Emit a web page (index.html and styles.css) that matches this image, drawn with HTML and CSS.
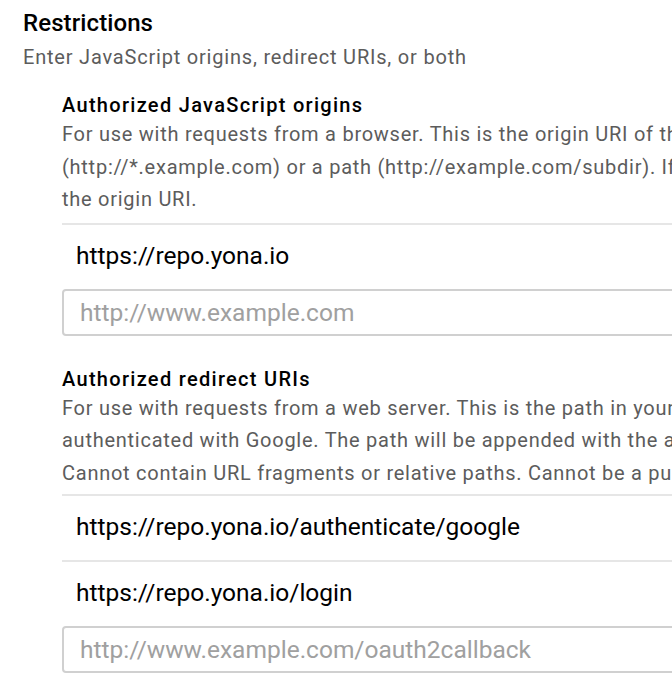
FILE: index.html
```html
<!DOCTYPE html>
<html>
<head>
<meta charset="utf-8">
<link rel="stylesheet" href="styles.css">
</head>
<body>
<div class="page">
  <h1 class="title">Restrictions</h1>
  <p class="subtitle">Enter JavaScript origins, redirect URIs, or both</p>

  <section class="group">
    <h2 class="group-title">Authorized JavaScript origins</h2>
    <p class="desc">For use with requests from a browser. This is the origin URI of the client application. It can't contain a wildcard<br>(http://*.example.com) or a path (http://example.com/subdir). If you're using a nonstandard port, you must include it in<br>the origin URI.</p>
    <ul class="uri-list">
      <li class="uri-item">https://repo.yona.io</li>
    </ul>
    <div class="uri-input"><input type="text" placeholder="http://www.example.com"></div>
  </section>

  <section class="group">
    <h2 class="group-title">Authorized redirect URIs</h2>
    <p class="desc desc-tight">For use with requests from a web server. This is the path in your application that users are redirected to after they have<br>authenticated with Google. The path will be appended with the authorization code for access. Must have a protocol.<br>Cannot contain URL fragments or relative paths. Cannot be a public IP address.</p>
    <ul class="uri-list">
      <li class="uri-item">https://repo.yona.io/authenticate/google</li>
      <li class="uri-item">https://repo.yona.io/login</li>
    </ul>
    <div class="uri-input"><input type="text" placeholder="http://www.example.com/oauth2callback"></div>
  </section>
</div>
</body>
</html>
```

FILE: styles.css
```css
html, body {
  margin: 0;
  padding: 0;
  background: #fff;
  overflow: hidden;
}
body {
  font-family: Roboto, "Liberation Sans", sans-serif;
  color: #000;
}
.page {
  width: 1200px;
  padding: 7px 0 0 23px;
}
.title {
  margin: 0;
  font-size: 24px;
  line-height: 32px;
  font-weight: 500;
  letter-spacing: 0.1px;
  color: #000;
}
.subtitle {
  margin: 2px 0 0;
  font-size: 20px;
  line-height: 32px;
  letter-spacing: 0.8px;
  color: #5c5c5c;
}
.group {
  margin: 19px 0 0 39px;
}
.group + .group {
  margin-top: 30px;
}
.group-title {
  margin: 0;
  font-size: 20px;
  line-height: 26px;
  font-weight: 500;
  letter-spacing: 1.3px;
  color: #000;
}
.desc {
  margin: 0 0 7px;
  font-size: 20px;
  line-height: 32.5px;
  letter-spacing: 0.74px;
  color: #5c5c5c;
  white-space: nowrap;
}
.desc-tight {
  margin-bottom: 5px;
}
.uri-list {
  list-style: none;
  margin: 0;
  padding: 0;
}
.uri-item {
  border-top: 2px solid #e6e6e6;
  height: 62px;
  line-height: 62px;
  padding: 0 0 2px 14px;
  font-size: 24.5px;
  color: #000;
  white-space: nowrap;
}
.uri-input input {
  box-sizing: border-box;
  display: block;
  width: 100%;
  height: 47px;
  margin: 0;
  border: 2px solid #d0d0d0;
  border-radius: 4px;
  padding: 0 16px;
  font-family: Roboto, "Liberation Sans", sans-serif;
  font-size: 24.5px;
  color: #000;
  background: #fff;
  outline: none;
}
.uri-input input::placeholder {
  color: #a0a0a0;
}
```
